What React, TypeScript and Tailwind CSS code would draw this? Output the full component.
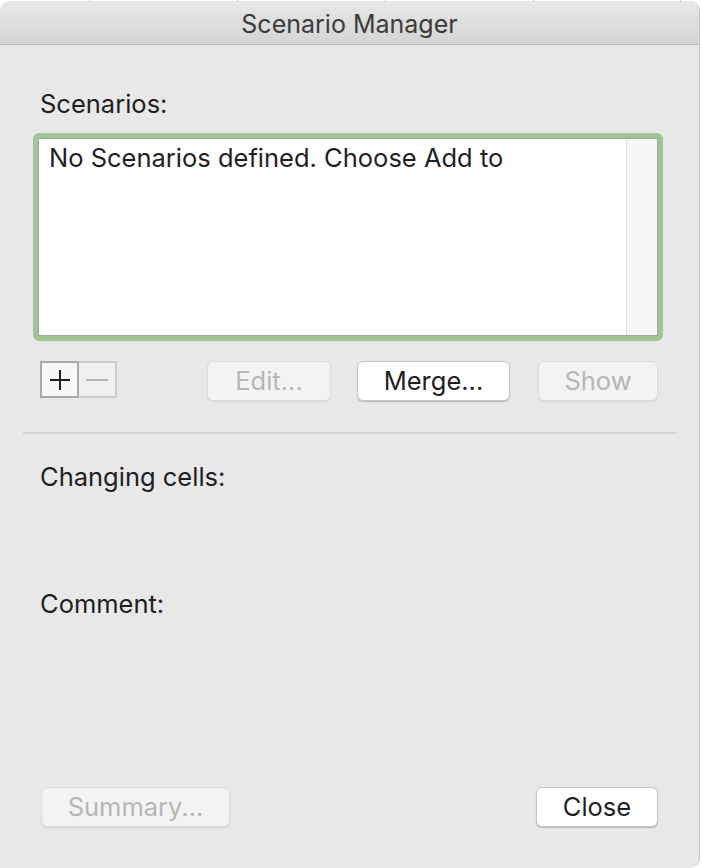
import { ReactNode } from 'react'

function MacButton({ label, width, disabled }: { label: string; width: string; disabled?: boolean }) {
  return (
    <div
      className={`h-[40px] ${width} flex items-center justify-center rounded-[6px] border text-[25.5px] ${
        disabled
          ? 'bg-[#f3f3f3] border-[#dcdcdc] text-[#b6b6b6] shadow-[0_1px_1px_rgba(0,0,0,0.08)]'
          : 'bg-white border-[#c6c6c6] text-[#1f1f1f] shadow-[0_1px_1px_rgba(0,0,0,0.22)]'
      }`}
    >
      {label}
    </div>
  )
}

function Label({ children, className = '' }: { children: ReactNode; className?: string }) {
  return <div className={`pl-[7px] h-[28px] leading-[28px] text-[25.5px] text-[#1f1f1f] ${className}`}>{children}</div>
}

export default function App() {
  return (
    <div className="w-[702px] h-[868px] bg-white relative overflow-hidden font-['Inter','Liberation_Sans',sans-serif]">
      {/* grid ticks of the sheet behind */}
      <div className="absolute top-0 left-[89px] w-px h-[2px] bg-[#c8c8c8]" />
      <div className="absolute top-0 left-[237px] w-px h-[2px] bg-[#c8c8c8]" />
      <div className="absolute top-0 left-[385px] w-px h-[2px] bg-[#c8c8c8]" />
      <div className="absolute top-0 left-[533px] w-px h-[2px] bg-[#c8c8c8]" />
      <div className="absolute top-0 left-[680px] w-px h-[2px] bg-[#c8c8c8]" />

      <div className="mt-px w-[700px] h-[867px] flex flex-col bg-[#e8e8e8] rounded-t-[10px] rounded-br-[10px] border-r border-[#c4c4c4] overflow-hidden">
        {/* title bar */}
        <div className="h-[44px] shrink-0 pt-[5px] flex items-center justify-center border-b border-[#b6b6b6] bg-gradient-to-b from-[#e8e8e8] to-[#d4d4d4] text-[25px] text-[#3b3b3b]">
          Scenario Manager
        </div>

        <div className="flex-1 flex flex-col px-[33px] pb-[41px]">
          <Label className="mt-[45px]">Scenarios:</Label>

          {/* scenarios list */}
          <div className="mt-[15px] h-[208px] w-[630px] rounded-[6px] border-[5px] border-[#9fc594] flex">
            <div className="flex-1 flex border border-[#a3a3a3] bg-white">
              <div className="flex-1 pl-[10px] pt-[5px] text-[25.5px] leading-[28px] text-[#1f1f1f]">
                No Scenarios defined. Choose Add to
              </div>
              <div className="w-[31px] bg-[#f7f7f7] border-l border-[#dddddd]" />
            </div>
          </div>

          {/* add / remove and actions */}
          <div className="mt-[20px] flex items-start">
            <div className="ml-[7px] flex">
              <div className="w-[39px] h-[37px] border-2 border-[#a9a9a9] bg-[#f7f7f7] flex items-center justify-center">
                <svg width="22" height="22" viewBox="0 0 22 22">
                  <path d="M11 1v20M1 11h20" stroke="#222" strokeWidth="2" />
                </svg>
              </div>
              <div className="w-[38px] h-[37px] border-2 border-l-0 border-[#cbcbcb] bg-[#efefef] flex items-center justify-center">
                <svg width="22" height="22" viewBox="0 0 22 22">
                  <path d="M0 11h22" stroke="#b4b4b4" strokeWidth="2" />
                </svg>
              </div>
            </div>
            <div className="ml-[90px]">
              <MacButton label="Edit..." width="w-[124px]" disabled />
            </div>
            <div className="ml-[26px]">
              <MacButton label="Merge..." width="w-[153px]" />
            </div>
            <div className="ml-[28px]">
              <MacButton label="Show" width="w-[120px]" disabled />
            </div>
          </div>

          <div className="mt-[31px] -ml-[10px] w-[653px] h-[2px] bg-[#d3d3d3]" />

          <Label className="mt-[29px]">Changing cells:</Label>
          <Label className="mt-[99px]">Comment:</Label>

          <div className="mt-auto flex items-center justify-between pl-[8px] pr-[8px]">
            <MacButton label="Summary..." width="w-[189px]" disabled />
            <MacButton label="Close" width="w-[122px]" />
          </div>
        </div>
      </div>
    </div>
  )
}
